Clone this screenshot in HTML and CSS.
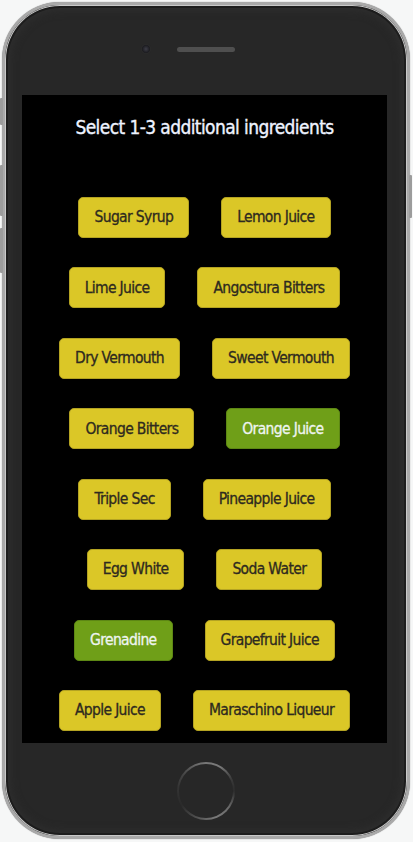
FILE: index.html
```html
<!DOCTYPE html>
<html lang="en">
<head>
<meta charset="utf-8">
<title>Select ingredients</title>
<link rel="stylesheet" href="styles.css">
</head>
<body>
<div class="phone">
  <span class="side-btn side-mute"></span>
  <span class="side-btn side-vol-up"></span>
  <span class="side-btn side-vol-down"></span>
  <span class="side-btn side-power"></span>
  <div class="top-bezel">
    <span class="camera"></span>
    <span class="speaker"></span>
  </div>
  <main class="screen">
    <h1 class="title">Select 1-3 additional ingredients</h1>
    <div class="options">
      <div class="row"><button class="chip">Sugar Syrup</button><button class="chip">Lemon Juice</button></div>
      <div class="row"><button class="chip">Lime Juice</button><button class="chip">Angostura Bitters</button></div>
      <div class="row"><button class="chip">Dry Vermouth</button><button class="chip">Sweet Vermouth</button></div>
      <div class="row"><button class="chip">Orange Bitters</button><button class="chip selected">Orange Juice</button></div>
      <div class="row"><button class="chip">Triple Sec</button><button class="chip">Pineapple Juice</button></div>
      <div class="row"><button class="chip">Egg White</button><button class="chip">Soda Water</button></div>
      <div class="row"><button class="chip selected">Grenadine</button><button class="chip">Grapefruit Juice</button></div>
      <div class="row"><button class="chip">Apple Juice</button><button class="chip">Maraschino Liqueur</button></div>
    </div>
  </main>
  <div class="bottom-bezel">
    <span class="home"></span>
  </div>
</div>
</body>
</html>
```
FILE: styles.css
```css
* { box-sizing: border-box; }
html, body {
  margin: 0;
  padding: 0;
  background: #f6f7f7;
}
body {
  width: 413px;
  height: 842px;
  overflow: hidden;
  font-family: "DejaVu Sans Condensed", "Liberation Sans Narrow", "Roboto Condensed", "Liberation Sans", sans-serif;
}
.phone {
  position: relative;
  width: 408px;
  height: 837px;
  margin: 2px 0 0 2px;
  border: 3px solid #a9a9a9;
  border-radius: 58px;
  background: #272727;
  box-shadow: inset 0 0 0 1px #c9c9c9, inset 0 0 0 3px #1d1d1d, inset 0 0 8px 5px #2f2f2f, 0 0 1px #7a7a7a;
  padding: 0 20px 0 17px;
  display: flex;
  flex-direction: column;
}
.side-btn {
  position: absolute;
  width: 3px;
  background: #9c9c9c;
  border-radius: 1px;
}
.side-mute { left: -5px; top: 93px; height: 27px; }
.side-vol-up { left: -5px; top: 160px; height: 51px; }
.side-vol-down { left: -5px; top: 223px; height: 45px; }
.side-power { right: -5px; top: 170px; height: 43px; }
.top-bezel {
  height: 90px;
  display: flex;
  align-items: flex-start;
  gap: 27px;
  padding: 40px 0 0 120px;
}
.camera {
  width: 8px;
  height: 8px;
  border-radius: 50%;
  background: radial-gradient(circle at 50% 50%, #3d3d47 0, #1a1a1e 70%);
  box-shadow: 0 0 1px #444;
}
.speaker {
  width: 58px;
  height: 5px;
  margin-top: 2px;
  border-radius: 3px;
  background: #4f4f4f;
}
.screen {
  height: 648px;
  background: #000;
  padding-top: 17px;
  display: flex;
  flex-direction: column;
  align-items: center;
}
.title {
  margin: 0;
  font-size: 19px;
  letter-spacing: -0.6px;
  line-height: 30px;
  font-weight: normal;
  -webkit-text-stroke: 0.35px #eef3ff;
  color: #eef3ff;
  text-align: center;
}
.options {
  margin-top: 55px;
  width: 100%;
  display: flex;
  flex-direction: column;
  gap: 29.43px;
}
.row {
  display: flex;
  justify-content: center;
  gap: 32px;
}
.chip {
  height: 41px;
  padding: 1px 15px 0;
  border: 1px solid #b4a322;
  border-radius: 5px;
  background: #dbc727;
  color: #2e2a1f;
  -webkit-text-stroke: 0.3px #2e2a1f;
  font-family: inherit;
  font-size: 15.5px;
  letter-spacing: -0.65px;
  line-height: 1;
  cursor: pointer;
}
.chip.selected {
  background: #6f9f18;
  border-color: #5d8714;
  color: #eef4f0;
  -webkit-text-stroke: 0.3px #eef4f0;
}
.bottom-bezel {
  flex: 1;
  display: flex;
  justify-content: center;
  padding: 19px 0 0 3px;
}
.home {
  width: 58px;
  height: 58px;
  border-radius: 50%;
  background: conic-gradient(from 0deg, #777 0deg, #7a7a7a 30deg, #3a3a3a 65deg, #2c2c2c 90deg, #6a6a6a 125deg, #7a7a7a 160deg, #505050 200deg, #2a2a2a 240deg, #333 275deg, #444 305deg, #6a6a6a 340deg, #777 360deg);
  display: flex;
  align-items: center;
  justify-content: center;
}
.home::before {
  content: "";
  width: 54px;
  height: 54px;
  border-radius: 50%;
  background: #272727;
}
```
